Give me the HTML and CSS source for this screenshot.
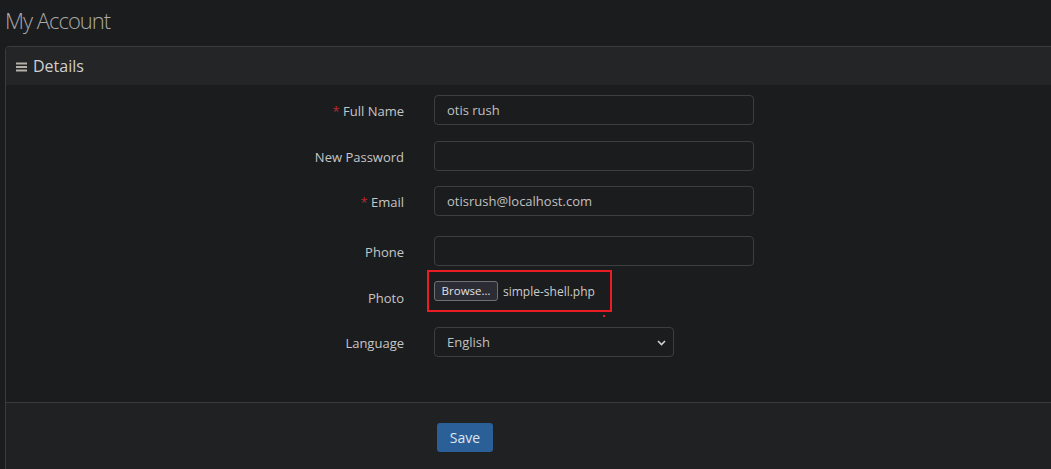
FILE: index.html
```html
<!DOCTYPE html>
<html>
<head>
<meta charset="utf-8">
<link rel="stylesheet" href="styles.css">
</head>
<body>
<h1 class="page-title">My Account</h1>
<div class="panel">
  <div class="panel-head">
    <svg class="menu-icon" width="11" height="10" viewBox="0 0 11 10"><rect x="0" y="0.5" width="11" height="2" fill="#b5b0a8"/><rect x="0" y="4" width="11" height="2" fill="#b5b0a8"/><rect x="0" y="7.5" width="11" height="2" fill="#b5b0a8"/></svg>
    <span>Details</span>
  </div>
  <div class="panel-body">
    <div class="row r1">
      <label class="lbl"><span class="req">*</span> Full Name</label>
      <div class="field wide">otis rush</div>
    </div>
    <div class="row r2">
      <label class="lbl">New Password</label>
      <div class="field wide"></div>
    </div>
    <div class="row r3">
      <label class="lbl"><span class="req">*</span> Email</label>
      <div class="field wide">otisrush@localhost.com</div>
    </div>
    <div class="row r4">
      <label class="lbl">Phone</label>
      <div class="field wide"></div>
    </div>
    <div class="row r5">
      <label class="lbl lbl-photo">Photo</label>
      <div class="file">
        <span class="browse">Browse…</span>
        <span class="fname">simple-shell.php</span>
        <span class="highlight"></span>
        <span class="dot"></span>
      </div>
    </div>
    <div class="row r6">
      <label class="lbl">Language</label>
      <div class="field select">English
        <svg class="chev" width="9" height="6" viewBox="0 0 9 6"><path d="M1 1 L4.5 4.5 L8 1" stroke="#d0d0d0" stroke-width="1.6" fill="none"/></svg>
      </div>
    </div>
  </div>
  <div class="panel-foot">
    <button class="btn-save">Save</button>
  </div>
</div>
</body>
</html>
```
FILE: styles.css
```css
html, body {
  margin: 0;
  padding: 0;
  background: #1b1c1e;
  overflow: hidden;
  height: 469px;
}
body {
  font-family: "Open Sans", "Noto Sans", sans-serif;
  color: #c8c8c8;
}
.page-title {
  margin: 0;
  padding: 5px 0 0 5px;
  height: 46px;
  box-sizing: border-box;
  font-size: 22px;
  font-weight: 300;
  line-height: 30px;
  color: #a9a9a9;
  letter-spacing: -1px;
}
.panel {
  margin-left: 5px;
  margin-right: -10px;
  border: 1px solid #3a3b3d;
  border-radius: 4px 0 0 0;
  background: #1b1c1e;
}
.panel-head {
  height: 38px;
  background: #242527;
  display: flex;
  align-items: center;
  padding-left: 10px;
  font-size: 16px;
  color: #cfcfcf;
  border-radius: 4px 0 0 0;
}
.menu-icon {
  margin-right: 6px;
  margin-top: 1px;
}
.panel-body {
  padding: 10px 0 45px 0;
}
.row {
  display: flex;
  align-items: flex-start;
  height: 30px;
}
.r2 { margin-top: 16px; }
.r3 { margin-top: 15px; }
.r4 { margin-top: 20px; }
.r5 { margin-top: 10px; }
.r6 { margin-top: 21px; }
.lbl {
  width: 398px;
  text-align: right;
  font-size: 13px;
  line-height: 32px;
  color: #c6c6c6;
}
.lbl-photo {
  padding-top: 6px;
}
.req {
  color: #c0282d;
}
.field {
  margin-left: 30px;
  box-sizing: border-box;
  height: 30px;
  border: 1px solid #3d3e40;
  border-radius: 4px;
  background: #1b1c1e;
  padding-left: 12px;
  font-size: 13px;
  line-height: 28px;
  color: #c0c0c0;
}
.wide { width: 320px; }
.select {
  width: 240px;
  position: relative;
}
.chev {
  position: absolute;
  right: 7px;
  top: 12px;
}
.file {
  margin-left: 30px;
  position: relative;
  display: flex;
  align-items: center;
  height: 30px;
  font-size: 12px;
}
.browse {
  box-sizing: border-box;
  height: 20px;
  width: 64px;
  border: 1px solid #6f7076;
  border-radius: 3px;
  background: #2b2c34;
  color: #e0e0e0;
  font-size: 11.5px;
  line-height: 18px;
  text-align: center;
}
.fname {
  margin-left: 5px;
  color: #cccccc;
}
.highlight {
  position: absolute;
  left: -7px;
  top: -6px;
  width: 185px;
  height: 42px;
  box-sizing: border-box;
  border: 2px solid #ec1c24;
}
.dot {
  position: absolute;
  left: 169px;
  top: 39px;
  width: 2px;
  height: 2px;
  background: #ec1c24;
}
.panel-foot {
  border-top: 1px solid #3a3b3d;
  background: #202123;
  padding: 20px 0 20px 431px;
  height: 60px;
}
.btn-save {
  width: 56px;
  height: 29px;
  border: none;
  border-radius: 3px;
  background: #2a5f97;
  color: #dfe6ee;
  font-family: "Open Sans", "Noto Sans", sans-serif;
  font-size: 14px;
  padding: 0;
}
```
